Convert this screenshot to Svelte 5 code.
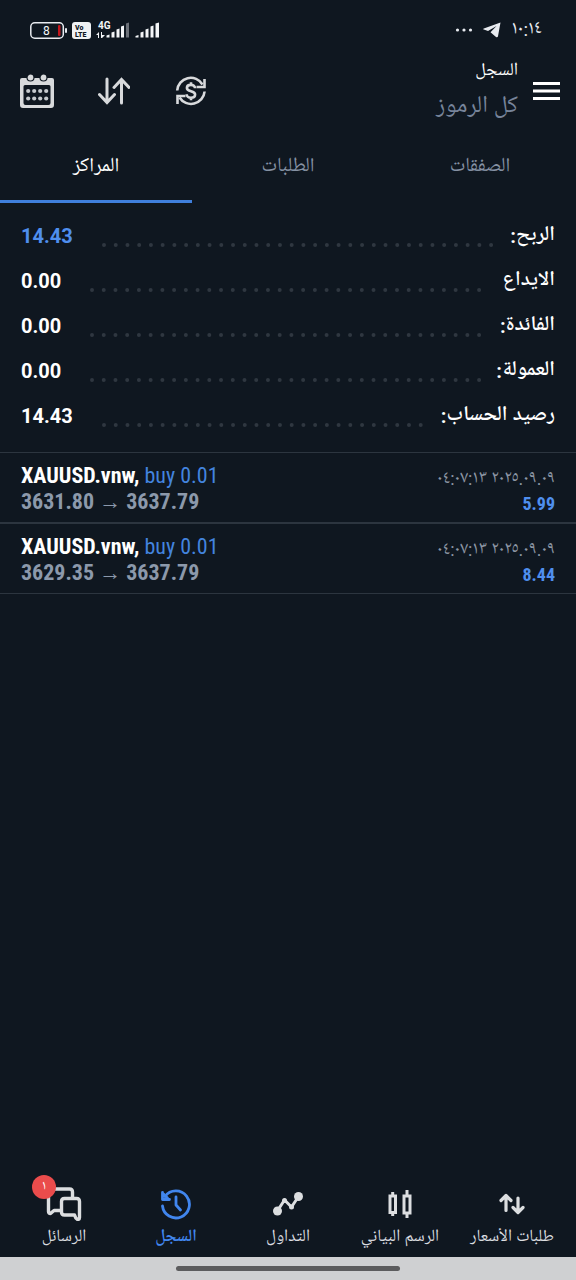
<script lang="ts">
	interface Deal {
		symbol: string;
		side: string;
		volume: string;
		open: string;
		close: string;
		time: string;
		profit: string;
	}

	const tabs = [
		{ id: 'deals', label: 'الصفقات' },
		{ id: 'orders', label: 'الطلبات' },
		{ id: 'positions', label: 'المراكز' }
	];

	const summary = [
		{ label: 'الربح:', value: '14.43', accent: true },
		{ label: 'الايداع', value: '0.00' },
		{ label: 'الفائدة:', value: '0.00' },
		{ label: 'العمولة:', value: '0.00' },
		{ label: 'رصيد الحساب:', value: '14.43' }
	];

	const deals: Deal[] = [
		{ symbol: 'XAUUSD.vnw', side: 'buy', volume: '0.01', open: '3631.80', close: '3637.79', time: '٢٠٢٥.٠٩.٠٩ ٠٤:٠٧:١٣', profit: '5.99' },
		{ symbol: 'XAUUSD.vnw', side: 'buy', volume: '0.01', open: '3629.35', close: '3637.79', time: '٢٠٢٥.٠٩.٠٩ ٠٤:٠٧:١٣', profit: '8.44' }
	];

	const nav = [
		{ id: 'quotes', label: 'طلبات الأسعار' },
		{ id: 'chart', label: 'الرسم البياني' },
		{ id: 'trade', label: 'التداول' },
		{ id: 'history', label: 'السجل' },
		{ id: 'messages', label: 'الرسائل', badge: '١' }
	];

	let activeTab = $state('positions');
	let activeNav = $state('history');
</script>

<div class="app" dir="rtl">
	<div class="status">
		<div class="status-group">
			<span class="clock">١٠:١٤</span>
			<svg width="18" height="16" viewBox="0 0 18 16" aria-hidden="true">
				<path d="M17.5 0.5 0.8 6.4c-.7.3-.7.9 0 1.1l4.200 1.500L13.500 4 7.500 10.200l5.500 4.800c1 .7 1.800.3 2-.8z" fill="#e8ebf0" />
			</svg>
			<svg width="18" height="4" viewBox="0 0 18 4" fill="#e8ebf0" aria-hidden="true">
				<circle cx="2.5" cy="2" r="1.6" /><circle cx="9" cy="2" r="1.6" /><circle cx="15.5" cy="2" r="1.6" />
			</svg>
		</div>
		<div class="status-group" dir="ltr">
			<svg width="37" height="17" viewBox="0 0 37 17" aria-hidden="true">
				<rect x="0.8" y="0.8" width="32.5" height="15.4" rx="4" fill="none" stroke="#e8ebf0" stroke-width="1.5" />
				<rect x="28" y="3" width="2.5" height="11" rx="1" fill="#c4161c" />
				<rect x="35" y="6" width="2" height="5" rx="1" fill="#e8ebf0" />
				<text x="13" y="13" font-size="12" fill="#f4f6f8">8</text>
			</svg>
			<svg width="19" height="17" viewBox="0 0 19 17" aria-hidden="true">
				<rect width="19" height="17" rx="3" fill="#f0f2f4" />
				<text x="3" y="8" font-size="7" font-weight="900" fill="#10181f">Vo</text>
				<text x="3" y="15" font-size="7" font-weight="900" fill="#10181f">LTE</text>
			</svg>
			<svg width="34" height="20" viewBox="0 0 34 20" fill="#f4f6f8" aria-hidden="true">
				<text x="2" y="9" font-size="10" font-weight="700">4G</text>
				<path d="M0 15l3-3v6h-1v-3zM5 18v-6h1v3h3l-3 3z" />
				<path d="M10.5 17.5v-2l3-1v3zM15.5 17.5v-5l3-1v6zM20.5 17.5v-8l3-1v9zM25 17.5v-11l3-1v12z" />
				<path d="M30 17.5v-14l3-1v15z" fill="#6b7078" />
			</svg>
			<svg width="25" height="18" viewBox="0 0 25 18" fill="#f4f6f8" aria-hidden="true">
				<path d="M0.5 16.5v-1.5l3-1v2.5zM5.5 16.5v-5l3-1v6zM10.5 16.5v-8l3-1v9zM15.5 16.5v-11l3-1v12zM20.5 16.5v-14l3.5-1v15z" />
			</svg>
		</div>
	</div>

	<header class="header">
		<button class="menu" aria-label="القائمة">
			<svg width="27" height="20" viewBox="0 0 27 20" aria-hidden="true">
				<path d="M0 2.5h27M0 10h27M0 17.5h27" stroke="#fff" stroke-width="3" />
			</svg>
		</button>
		<div class="titles">
			<h1>السجل</h1>
			<p>كل الرموز</p>
		</div>
		<div class="actions">
			<button aria-label="العملة">
				<svg width="32" height="32" viewBox="0 0 32 32" fill="none" stroke="#d8dadc" stroke-width="2.6" aria-hidden="true">
					<path d="M2.2 15.5A13.6 13.6 0 0 1 27.5 9.5" />
					<path d="M29.5 4v8h-8" />
					<path d="M29.6 16.5A13.6 13.6 0 0 1 4.5 22.5" />
					<path d="M2.5 29v-8h8" />
					<path d="M20 13.2c0-2-1.7-3.3-4.1-3.3s-4 1.2-4 3c0 4.4 8.2 2.1 8.2 6.6 0 1.900-1.700 3.200-4.200 3.200s-4.200-1.400-4.200-3.500M16 7.200v2.800M16 22.500v2.800" />
				</svg>
			</button>
			<button aria-label="ترتيب">
				<svg width="32" height="28" viewBox="0 0 32 28" fill="none" stroke="#d8dadc" stroke-width="3" stroke-linecap="round" aria-hidden="true">
					<path d="M9 2v23M1.5 17.5l7.5 8 7.5-8M23.5 26V3M16 10.5l7.5-8 7.5 8" />
				</svg>
			</button>
			<button aria-label="التقويم">
				<svg width="34" height="34" viewBox="0 0 34 34" aria-hidden="true">
					<path fill-rule="evenodd" fill="#d8dadc" d="M2 4h30q2 0 2 2v25q0 3-3 3H3q-3 0-3-3V6q0-2 2-2zM5 11q-1.500 0-1.500 1.500v16.500q0 2 2 2h23q2 0 2-2V12.500q0-1.500-1.500-1.500z" />
					<g fill="#d8dadc" stroke="#0f1720" stroke-width="1.2">
						<circle cx="10.5" cy="3.5" r="3.5" /><circle cx="23.5" cy="3.5" r="3.5" />
					</g>
					<g fill="#c6cace">
						<circle cx="8.2" cy="17" r="2.1" /><circle cx="14.2" cy="17" r="2.1" /><circle cx="20.2" cy="17" r="2.1" /><circle cx="26.2" cy="17" r="2.1" />
						<circle cx="8.2" cy="24.5" r="2.1" /><circle cx="14.2" cy="24.5" r="2.1" /><circle cx="20.2" cy="24.5" r="2.1" /><circle cx="26.2" cy="24.5" r="2.1" />
					</g>
				</svg>
			</button>
		</div>
	</header>

	<div class="tabs" role="tablist">
		{#each tabs as tab}
			<button
				role="tab"
				aria-selected={activeTab === tab.id}
				class:active={activeTab === tab.id}
				onclick={() => (activeTab = tab.id)}
			>{tab.label}</button>
		{/each}
	</div>

	<main>
		<dl class="summary">
			{#each summary as row}
				<div class="summary-row">
					<dt>{row.label}</dt>
					<svg class="leader" aria-hidden="true">
						<line x1="2" y1="2" x2="100%" y2="2" stroke="#2f3740" stroke-width="4" stroke-linecap="round" stroke-dasharray="0 11.73" />
					</svg>
					<dd class:accent={row.accent}>{row.value}</dd>
				</div>
			{/each}
		</dl>

		<ul class="deals">
			{#each deals as deal}
				<li>
					<div class="result">
						<time>{deal.time}</time>
						<strong>{deal.profit}</strong>
					</div>
					<div class="info" dir="ltr">
						<div class="symbol"><b>{deal.symbol},</b> <span>{deal.side} {deal.volume}</span></div>
						<div class="prices">{deal.open} <span class="arrow">→</span> {deal.close}</div>
					</div>
				</li>
			{/each}
		</ul>
	</main>

	<nav class="nav">
		{#each nav as item}
			<button class:active={activeNav === item.id} onclick={() => (activeNav = item.id)}>
				<span class="icon">
					{#if item.id === 'quotes'}
						<svg width="26" height="22" viewBox="0 0 26 22" fill="none" stroke="currentColor" stroke-width="3.2" stroke-linecap="round" stroke-linejoin="round" aria-hidden="true">
							<path d="M7 17.5V3M2 7.5l5-5 5 5M19 5v14M14 14.5l5 5 5-5" />
						</svg>
					{:else if item.id === 'chart'}
						<svg width="26" height="30" viewBox="0 0 26 30" fill="none" stroke="currentColor" stroke-width="3" aria-hidden="true">
							<path d="M3 7h5.500v16.500H3zM17 7h6v17h-6zM5.700 3v4M5.700 23v4M20 1v6M20 24v5" />
						</svg>
					{:else if item.id === 'trade'}
						<svg width="32" height="26" viewBox="0 0 32 26" fill="none" stroke="currentColor" stroke-width="3" aria-hidden="true">
							<path d="M5 20.5 12.5 9l7 7L26.5 5.5" stroke-linejoin="round" />
							<g fill="currentColor" stroke="none">
								<circle cx="5.5" cy="20" r="4.5" /><circle cx="12.5" cy="9.5" r="2.5" /><circle cx="19.5" cy="16" r="2.5" /><circle cx="26.5" cy="5.5" r="4.5" />
							</g>
						</svg>
					{:else if item.id === 'history'}
						<svg width="32" height="32" viewBox="0 0 32 32" fill="none" stroke="currentColor" stroke-width="2.8" stroke-linecap="round" stroke-linejoin="round" aria-hidden="true">
							<path d="M2.5 18A13.5 13.5 0 1 0 5 8.500" />
							<path d="M2.5 4.500V11.500H9.500M3.500 6l4 4" />
							<path d="M16 9v8l4.500 5" />
						</svg>
					{:else}
						<svg width="36" height="34" viewBox="0 0 36 34" fill="none" stroke="currentColor" stroke-width="3.4" stroke-linejoin="round" aria-hidden="true">
							<path d="M14.5 23.5H8l-3.500 3q-2 0-2-2V5q0-3 3-3h18q3 0 3 3v5.500" />
							<path d="M18.500 11.500h12q3 0 3 3v16q0 2-2 2-2-1-3-4.500h-10q-3 0-3-3V14.500q0-3 3-3z" />
						</svg>
					{/if}
					{#if item.badge}
						<span class="badge">{item.badge}</span>
					{/if}
				</span>
				<span class="label">{item.label}</span>
			</button>
		{/each}
	</nav>
	<div class="home"><span></span></div>
</div>

<style>
	:global(body) {
		margin: 0;
		background: #0f1720;
	}

	.app {
		display: flex;
		flex-direction: column;
		min-height: 100vh;
		background: #0f1720;
		color: #fff;
		font-family: Roboto, "Noto Naskh Arabic UI", "Noto Naskh Arabic", "Noto Sans Arabic", "DejaVu Sans", sans-serif;
	}

	button {
		margin: 0;
		padding: 0;
		border: 0;
		background: none;
		color: inherit;
		font: inherit;
		cursor: pointer;
	}

	svg {
		display: block;
	}

	.status {
		display: flex;
		justify-content: space-between;
		align-items: center;
		height: 60px;
		padding: 0 34px 0 30px;
	}

	.status-group {
		display: flex;
		align-items: center;
		gap: 5px;
	}

	.status-group:first-child {
		gap: 10px;
	}

	.clock {
		font-size: 19px;
		line-height: 24px;
		color: #e8ebf0;
	}

	.header {
		display: flex;
		align-items: center;
		height: 62px;
		padding: 0 16px 6px 13px;
		gap: 15px;
	}

	.titles {
		flex: 1;
	}

	h1 {
		margin: 0;
		font-size: 18px;
		font-weight: 400;
		line-height: 32px;
	}

	.titles p {
		margin: 0;
		font-size: 24px;
		line-height: 40px;
		color: #77849a;
	}

	.actions {
		display: flex;
		gap: 29px;
	}

	.actions button {
		display: grid;
		place-items: center;
		width: 48px;
		height: 48px;
	}

	.tabs {
		display: flex;
		height: 75px;
	}

	.tabs button {
		flex: 1;
		padding-top: 5px;
		border-bottom: 3px solid transparent;
		font-size: 20px;
		color: #8591a3;
	}

	.tabs .active {
		border-color: #3f7fdc;
		color: #fff;
	}

	main {
		flex: 1;
	}

	.summary {
		margin: 0;
		padding: 10px 21px 14px;
	}

	.summary-row {
		display: flex;
		align-items: center;
		height: 45px;
		line-height: 44px;
	}

	dt {
		font-size: 21px;
		font-weight: 600;
	}

	dd {
		margin: 0;
		font-size: 20px;
		font-weight: 700;
		line-height: 42px;
	}

	.accent,
	.result strong {
		color: #4f8fee;
	}

	.leader {
		flex: 1;
		align-self: flex-end;
		width: 0;
		height: 4px;
		margin: 0 12px 11px 29px;
		overflow: visible;
	}

	.deals {
		margin: 0;
		padding: 0;
		list-style: none;
		border-top: 1px solid #2c353f;
	}

	.deals li {
		display: flex;
		justify-content: space-between;
		padding: 10px 21px 7px;
		border-bottom: 2px solid #2c353f;
	}

	.deals li:last-child {
		border-bottom-width: 1px;
	}

	.info {
		font-family: "Roboto Condensed", Roboto, sans-serif;
		font-size: 22px;
		line-height: 26px;
	}

	.symbol span {
		color: #4384de;
	}

	.prices {
		font-weight: 700;
		color: #8c99ab;
	}

	.arrow {
		font-weight: 400;
	}

	.result {
		display: flex;
		flex-direction: column;
		align-items: flex-start;
	}

	time {
		font-size: 18px;
		line-height: 32px;
		color: #8c96a4;
	}

	.result strong {
		font-family: "Roboto Condensed", Roboto, sans-serif;
		font-size: 18px;
		line-height: 18px;
	}

	.nav {
		display: flex;
		padding: 0 8px 6px;
	}

	.nav button {
		display: flex;
		flex: 1;
		flex-direction: column;
		align-items: center;
		color: #dcdee0;
	}

	.icon {
		position: relative;
		display: grid;
		place-items: center;
		height: 38px;
	}

	.label {
		font-size: 17px;
		line-height: 28px;
		white-space: nowrap;
	}

	.nav .active {
		color: #4186ee;
		font-weight: 600;
	}

	.badge {
		position: absolute;
		top: -10px;
		left: -14px;
		width: 24px;
		height: 24px;
		border-radius: 12px;
		background: #ea4c4c;
		color: #fff;
		font-size: 13px;
		line-height: 24px;
	}

	.home {
		display: grid;
		place-items: center;
		height: 23px;
		background: #cfd0d2;
	}

	.home span {
		width: 39%;
		height: 5px;
		border-radius: 3px;
		background: #5c5c5e;
	}
</style>
